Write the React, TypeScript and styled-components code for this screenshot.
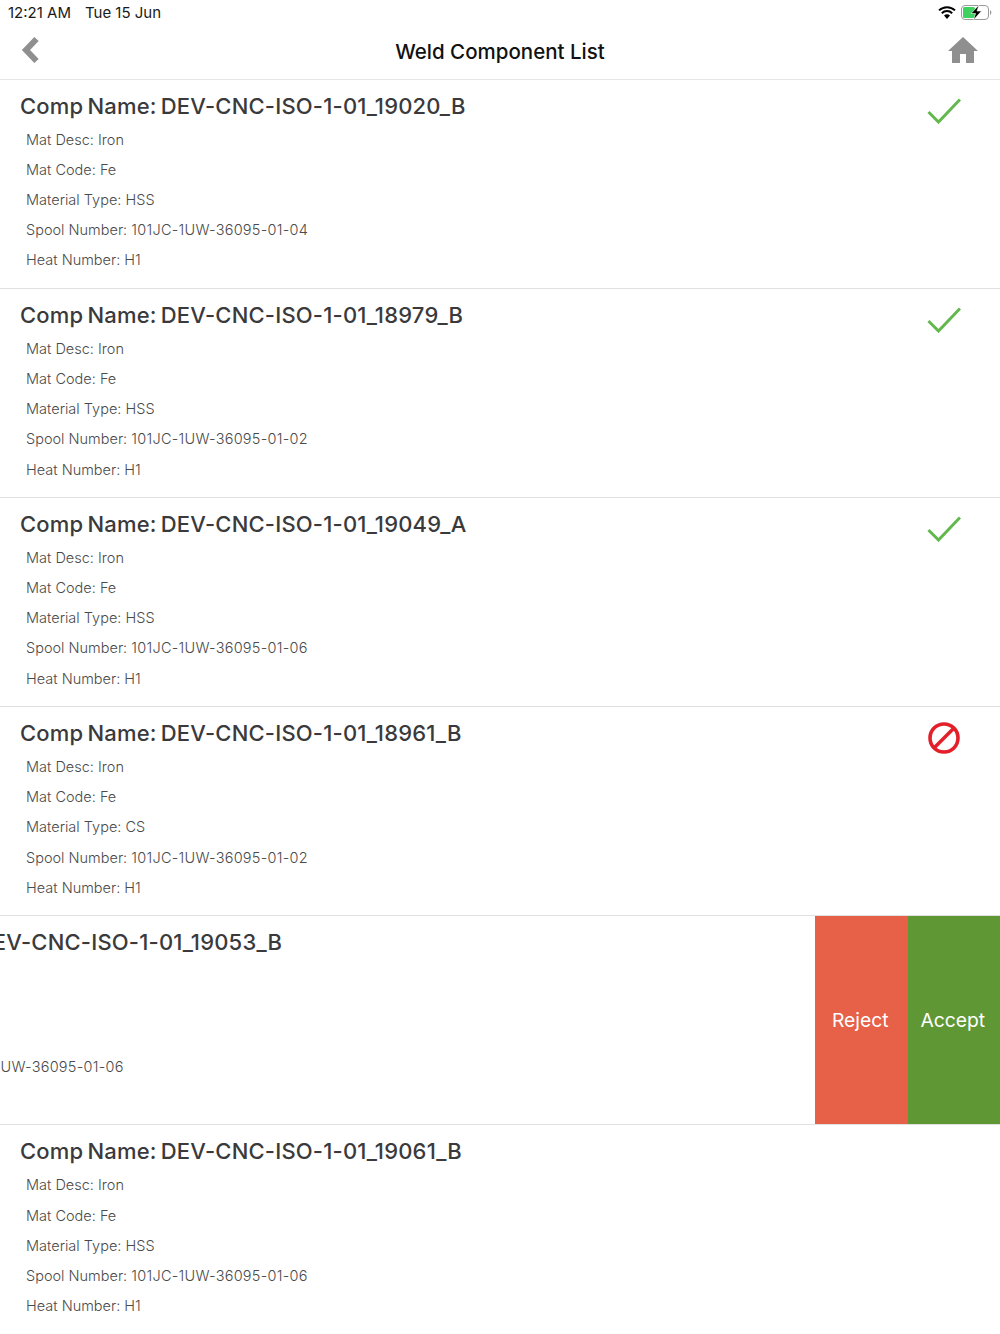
import React from "react";
import styled, { createGlobalStyle } from "styled-components";

const Global = createGlobalStyle`
  html, body { margin: 0; padding: 0; background: #fff; }
  body { font-family: Inter, "Liberation Sans", sans-serif; overflow: hidden; }
`;

const Page = styled.div`
  width: 1000px;
  height: 1334px;
  overflow: hidden;
  display: flex;
  flex-direction: column;
`;

const StatusBar = styled.div`
  height: 25px;
  flex: none;
  display: flex;
  align-items: center;
  justify-content: space-between;
  padding: 0 7px 0 8px;
  font-size: 15px;
  color: #1a1a1a;
`;

const StatusText = styled.div`
  display: flex;
  gap: 14px;
  white-space: nowrap;
`;

const StatusIcons = styled.div`
  display: flex;
  align-items: center;
  gap: 5px;
`;

const NavBar = styled.header`
  height: 54.5px;
  box-sizing: border-box;
  flex: none;
  border-bottom: 1px solid #e6e6e6;
  display: flex;
  align-items: center;
  justify-content: space-between;
  padding: 0 22px 3px 21px;
  position: relative;
`;

const NavTitle = styled.h1`
  position: absolute;
  left: 0;
  right: 0;
  top: 15px;
  margin: 0;
  text-align: center;
  font-size: 20.5px;
  line-height: 24px;
  font-weight: 500;
  color: #111;
`;

const List = styled.div`
  flex: none;
  display: flex;
  flex-direction: column;
`;

const Row = styled.section`
  height: 209.2px;
  box-sizing: border-box;
  border-bottom: 1px solid #e0e0e0;
  display: flex;
  overflow: hidden;
  flex-shrink: 0;
`;

const RowBody = styled.div<{ $swiped?: boolean }>`
  flex: none;
  width: ${(p) => (p.$swiped ? "815px" : "1000px")};
  box-sizing: border-box;
  padding: 11px 0 0 20px;
  display: flex;
  justify-content: space-between;
  overflow: hidden;
`;

const Texts = styled.div<{ $swiped?: boolean }>`
  flex: none;
  margin-left: ${(p) => (p.$swiped ? "-184px" : "0")};
`;

const CompName = styled.h2`
  margin: 0 0 4px;
  font-size: 22px;
  line-height: 30px;
  font-weight: 500;
  letter-spacing: 0.2px;
  word-spacing: -2px;
  color: #3a3a3c;
  white-space: nowrap;
`;

const Detail = styled.p`
  margin: 0 0 0 6px;
  font-size: 14.5px;
  line-height: 30.2px;
  font-weight: 300;
  color: #4a4a4a;
  white-space: nowrap;
`;

const SpoolValue = styled.span`
  letter-spacing: 0.26px;
`;

const StatusSlot = styled.div<{ $kind: "ok" | "no" }>`
  width: 34px;
  margin-right: 39px;
  padding-top: ${(p) => (p.$kind === "ok" ? "7px" : "3px")};
  flex: none;
`;

const Actions = styled.div`
  flex: none;
  width: 185px;
  display: flex;
`;

const ActionButton = styled.button<{ $bg: string }>`
  flex: 1;
  border: 0;
  padding: 0 2px 0 0;
  background: ${(p) => p.$bg};
  color: #fff;
  font: 400 19.3px Inter, "Liberation Sans", sans-serif;
`;

const Back = () => (
  <svg width="20" height="28" viewBox="0 0 20 28">
    <path d="M15.5 3 L5 14 L15.5 25" fill="none" stroke="#8f8f8f" strokeWidth="6" />
  </svg>
);

const Home = () => (
  <svg width="30" height="28" viewBox="0 0 30 28">
    <path d="M15 1 L30 15 L26 15 L26 27 L18 27 L18 18 L12 18 L12 27 L4 27 L4 15 L0 15 Z" fill="#8f8f8f" />
  </svg>
);

const Check = () => (
  <svg width="34" height="26" viewBox="0 0 34 26" display="block">
    <path d="M1.5 14 L11.5 24 L33 1.5" fill="none" stroke="#62b84c" strokeWidth="3" />
  </svg>
);

const Forbidden = () => (
  <svg width="34" height="34" viewBox="0 0 34 34" display="block">
    <circle cx="17" cy="17" r="14" fill="none" stroke="#e3202a" strokeWidth="3.6" />
    <path d="M7.5 26.5 L26.5 7.5" stroke="#e3202a" strokeWidth="3.6" />
  </svg>
);

const Wifi = () => (
  <svg width="18" height="13" viewBox="0 0 18 13">
    <path d="M9 13 L6 9.6 A4.5 4.5 0 0 1 12 9.6 Z" fill="#000" />
    <path d="M3.8 7.2 A7.5 7.5 0 0 1 14.2 7.2" fill="none" stroke="#000" strokeWidth="2" />
    <path d="M1 4.4 A11.5 11.5 0 0 1 17 4.4" fill="none" stroke="#000" strokeWidth="2" />
  </svg>
);

const Battery = () => (
  <svg width="32" height="15" viewBox="0 0 32 15">
    <rect x="0.5" y="0.5" width="27" height="14" rx="3.5" fill="none" stroke="#9a9a9a" />
    <rect x="2" y="2" width="12" height="11" rx="1.5" fill="#3ed160" />
    <path d="M29 5 A3 3 0 0 1 29 10 Z" fill="#9a9a9a" />
    <path d="M18 0 L10 8.5 L14.5 8.5 L12.5 15 L20.5 6 L16 6 Z" fill="#000" stroke="#fff" strokeWidth="0.6" />
  </svg>
);

type Item = { id: string; type: string; spool: string; status?: "ok" | "no"; swiped?: boolean };

const items: Item[] = [
  { id: "19020_B", type: "HSS", spool: "04", status: "ok" },
  { id: "18979_B", type: "HSS", spool: "02", status: "ok" },
  { id: "19049_A", type: "HSS", spool: "06", status: "ok" },
  { id: "18961_B", type: "CS", spool: "02", status: "no" },
  { id: "19053_B", type: "HSS", spool: "06", swiped: true },
  { id: "19061_B", type: "HSS", spool: "06" },
];

export default function App() {
  return (
    <Page>
      <Global />
      <StatusBar>
        <StatusText>
          <span>12:21 AM</span>
          <span>Tue 15 Jun</span>
        </StatusText>
        <StatusIcons>
          <Wifi />
          <Battery />
        </StatusIcons>
      </StatusBar>
      <NavBar>
        <Back />
        <NavTitle>Weld Component List</NavTitle>
        <Home />
      </NavBar>
      <List>
        {items.map((it) => (
          <Row key={it.id}>
            <RowBody $swiped={it.swiped}>
              <Texts $swiped={it.swiped}>
                <CompName>Comp Name: DEV-CNC-ISO-1-01_{it.id}</CompName>
                <Detail>Mat Desc: Iron</Detail>
                <Detail>Mat Code: Fe</Detail>
                <Detail>Material Type: {it.type}</Detail>
                <Detail>
                  Spool Number: <SpoolValue>101JC-1UW-36095-01-{it.spool}</SpoolValue>
                </Detail>
                <Detail>Heat Number: H1</Detail>
              </Texts>
              {it.status && (
                <StatusSlot $kind={it.status}>{it.status === "ok" ? <Check /> : <Forbidden />}</StatusSlot>
              )}
            </RowBody>
            {it.swiped && (
              <Actions>
                <ActionButton $bg="#e66148">Reject</ActionButton>
                <ActionButton $bg="#5f9734">Accept</ActionButton>
              </Actions>
            )}
          </Row>
        ))}
      </List>
    </Page>
  );
}
